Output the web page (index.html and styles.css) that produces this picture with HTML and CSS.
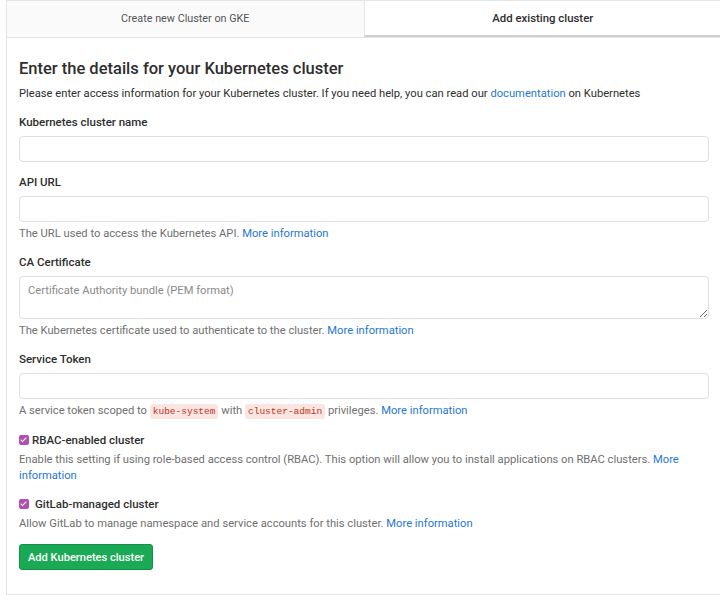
FILE: index.html
```html
<!DOCTYPE html>
<html>
<head>
<meta charset="utf-8">
<link rel="stylesheet" href="styles.css">
</head>
<body>
<div class="card">
  <div class="tabs">
    <div class="tab">Create new Cluster on GKE</div>
    <div class="tab active">Add existing cluster</div>
  </div>
  <div class="panel">
    <h3 class="title">Enter the details for your Kubernetes cluster</h3>
    <p class="intro">Please enter access information for your Kubernetes cluster. If you need help, you can read our <a href="#">documentation</a> on Kubernetes</p>

    <div class="group">
      <label class="label">Kubernetes cluster name</label>
      <input class="field" type="text">
    </div>

    <div class="group">
      <label class="label">API URL</label>
      <input class="field" type="text">
      <p class="help">The URL used to access the Kubernetes API. <a href="#">More information</a></p>
    </div>

    <div class="group">
      <label class="label">CA Certificate</label>
      <textarea class="field area" placeholder="Certificate Authority bundle (PEM format)"></textarea>
      <p class="help">The Kubernetes certificate used to authenticate to the cluster. <a href="#">More information</a></p>
    </div>

    <div class="group">
      <label class="label">Service Token</label>
      <input class="field" type="text">
      <p class="help">A service token scoped to <code>kube-system</code> with <code>cluster-admin</code> privileges. <a href="#">More information</a></p>
    </div>

    <div class="group">
      <label class="check"><input type="checkbox" checked class="box"><span>RBAC-enabled cluster</span></label>
      <p class="help">Enable this setting if using role-based access control (RBAC). This option will allow you to install applications on RBAC clusters. <a href="#">More</a> <a href="#">information</a></p>
    </div>

    <div class="group">
      <label class="check"><input type="checkbox" checked class="box"><span class="wide">GitLab-managed cluster</span></label>
      <p class="help">Allow GitLab to manage namespace and service accounts for this cluster. <a href="#">More information</a></p>
    </div>

    <button class="btn">Add Kubernetes cluster</button>
  </div>
</div>
</body>
</html>
```
FILE: styles.css
```css
html, body {
  margin: 0;
  padding: 0;
  background: #fff;
}
body {
  font-family: Roboto, "Liberation Sans", Arial, sans-serif;
  font-size: 11.2px;
  line-height: 16px;
  color: #2e2e2e;
}
.card {
  margin-left: 6px;
  width: 716px;
  border: 1px solid #e5e5e5;
  box-sizing: border-box;
  height: 595px;
}
.tabs {
  display: flex;
  border-bottom: 1px solid #e5e5e5;
}
.tab {
  flex: 1;
  height: 36px;
  display: flex;
  align-items: center;
  justify-content: center;
  background: #fafafa;
  color: #555;
  font-size: 10.8px;
  box-sizing: border-box;
}
.tab.active {
  background: #fff;
  border-left: 1px solid #e5e5e5;
  border-bottom: 2px solid #d0d0d0;
  font-weight: 500;
  font-size: 11.4px;
  color: #2e2e2e;
}
.panel {
  padding: 21px 12px 24px 12px;
}
.title {
  margin: 0;
  font-size: 16.5px;
  line-height: 20px;
  font-weight: 500;
  color: #2e2e2e;
}
.intro {
  margin: 7px 0 12px;
}
a {
  color: #1f78d1;
  text-decoration: none;
}
.group {
  margin-bottom: 12px;
}
.label {
  display: block;
  font-weight: 500;
  font-size: 11.5px;
  margin-bottom: 6px;
}
.field {
  display: block;
  width: 100%;
  box-sizing: border-box;
  height: 26px;
  border: 1px solid #dfdfdf;
  border-radius: 4px;
  padding: 4px 8px;
  font-family: inherit;
  font-size: 11.2px;
  margin: 0;
}
.area {
  height: 43px;
  padding-top: 6px;
  line-height: 16px;
  resize: vertical;
}
.area::placeholder {
  color: #8a8a8a;
}
.help {
  margin: 4px 0 0;
  color: #707070;
}
code {
  font-family: "Liberation Mono", monospace;
  font-size: 9.5px;
  background: #fbe5e1;
  color: #c0341d;
  padding: 2px 3px;
  border-radius: 3px;
}
.check {
  display: flex;
  align-items: center;
  font-weight: 500;
  font-size: 11.5px;
  gap: 3px;
}
.box {
  appearance: none;
  -webkit-appearance: none;
  width: 10px;
  height: 10px;
  margin: 0;
  border-radius: 2px;
  background: #b04fb2;
  position: relative;
}
.box:checked::after {
  content: "";
  position: absolute;
  left: 3px;
  top: 1px;
  width: 2px;
  height: 5px;
  border: solid #fff;
  border-width: 0 1.5px 1.5px 0;
  transform: rotate(45deg);
}
.wide {
  margin-left: 3px;
}
.btn {
  height: 26px;
  padding: 0 8px;
  background: #1aaa55;
  border: 1px solid #168f48;
  border-radius: 3px;
  color: #fff;
  font-family: inherit;
  font-size: 11.1px;
  font-weight: 500;
}
```
